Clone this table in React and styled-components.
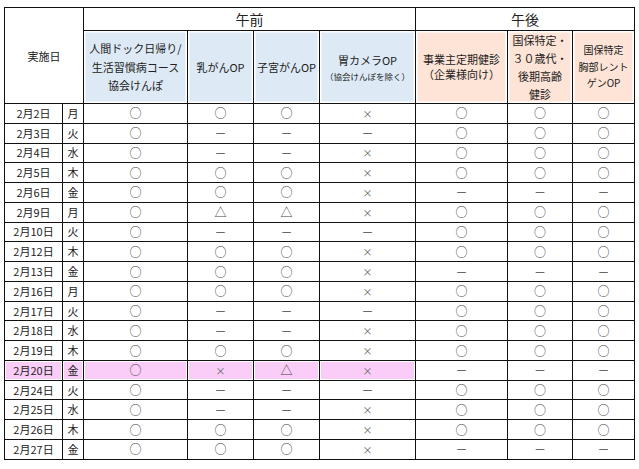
import React from "react";
import styled, { createGlobalStyle } from "styled-components";

const Global = createGlobalStyle`
  html, body { margin: 0; padding: 0; background: #fff; }
  body { font-family: "Noto Sans CJK JP", "Noto Sans", sans-serif; color: #222; }
`;

const Page = styled.div`
  padding: 7px 0 0 4px;
`;

const Table = styled.table`
  border-collapse: collapse;
  table-layout: fixed;
  width: 630px;
`;

const GroupHead = styled.th`
  height: 22px;
  padding: 0;
  border: 1px solid #111;
  font-size: 14px;
  font-weight: 400;
  line-height: 1;
  text-align: center;
  vertical-align: middle;
  color: #222;
`;

const DateHead = styled.th`
  padding: 0;
  border: 1px solid #111;
  font-size: 11px;
  font-weight: 400;
  text-align: center;
  color: #222;
`;

const SubHead = styled.th`
  height: 72px;
  padding: 0 2px;
  border: 1px solid #111;
  background: ${(p) => (p.$pm ? "#fde4d6" : "#dde9f5")};
  box-shadow: inset 0 0 0 1.5px #fff;
  font-size: ${(p) => p.$size || 11}px;
  line-height: ${(p) => p.$lh || 18}px;
  font-weight: 400;
  text-align: center;
  vertical-align: middle;
  color: #222;
`;

const Small = styled.span`
  display: block;
  margin-top: 1px;
  font-size: 8.5px;
  line-height: 14px;
`;

const Row = styled.tr`
  height: 19.78px;
`;

const Cell = styled.td`
  padding: 0;
  border: 1px solid #111;
  text-align: center;
  vertical-align: middle;
  font-size: 11px;
  line-height: 1;
  color: #222;
  background: ${(p) => (p.$hl ? "#f9cdf7" : "#fff")};
  box-shadow: ${(p) => (p.$hl ? "inset 0 0 0 1px #fff" : "none")};
  white-space: nowrap;
`;

const Mark = styled.span`
  display: inline-block;
  font-size: ${(p) => (p.$k === "x" ? 10 : 12)}px;
  color: ${(p) => (p.$k === "x" ? "#666" : "#444")};
  line-height: 1;
`;

const glyph = { o: "○", x: "×", d: "－", t: "△" };

const rows = [
  ["2月2日", "月", "ooox ooo"],
  ["2月3日", "火", "oddd ooo"],
  ["2月4日", "水", "oddx ooo"],
  ["2月5日", "木", "ooox ooo"],
  ["2月6日", "金", "ooox ddd"],
  ["2月9日", "月", "ottx ooo"],
  ["2月10日", "火", "oddd ooo"],
  ["2月12日", "木", "ooox ooo"],
  ["2月13日", "金", "ooox ddd"],
  ["2月16日", "月", "ooox ooo"],
  ["2月17日", "火", "oddd ooo"],
  ["2月18日", "水", "oddx ooo"],
  ["2月19日", "木", "ooox ooo"],
  ["2月20日", "金", "oxtx ddd", true],
  ["2月24日", "火", "oddd ooo"],
  ["2月25日", "水", "oddx ooo"],
  ["2月26日", "木", "ooox ooo"],
  ["2月27日", "金", "ooox ddd"],
];

const widths = [58, 21, 104, 66, 66, 96, 92, 65, 62];

export default function App() {
  return (
    <Page>
      <Global />
      <Table>
        <colgroup>
          {widths.map((w, i) => (
            <col key={i} style={{ width: w }} />
          ))}
        </colgroup>
        <thead>
          <tr>
            <DateHead rowSpan={2} colSpan={2}>実施日</DateHead>
            <GroupHead colSpan={4}>午前</GroupHead>
            <GroupHead colSpan={3}>午後</GroupHead>
          </tr>
          <tr>
            <SubHead $lh={18.5}>
              人間ドック日帰り/
              <br />
              生活習慣病コース
              <br />
              協会けんぽ
            </SubHead>
            <SubHead>乳がんOP</SubHead>
            <SubHead>子宮がんOP</SubHead>
            <SubHead $lh={16}>
              胃カメラOP
              <Small>（協会けんぽを除く）</Small>
            </SubHead>
            <SubHead $pm $lh={15}>
              事業主定期健診
              <br />
              （企業様向け）
            </SubHead>
            <SubHead $pm $lh={18}>
              国保特定・
              <br />
              ３０歳代・
              <br />
              後期高齢
              <br />
              健診
            </SubHead>
            <SubHead $pm $size={10} $lh={16.5}>
              国保特定
              <br />
              胸部レント
              <br />
              ゲンOP
            </SubHead>
          </tr>
        </thead>
        <tbody>
          {rows.map(([date, wd, marks, hl]) => {
            const m = marks.replace(" ", "").split("");
            return (
              <Row key={date}>
                <Cell $hl={hl}>{date}</Cell>
                <Cell $hl={hl}>{wd}</Cell>
                {m.map((k, i) => (
                  <Cell key={i} $hl={hl && i < 4}>
                    <Mark $k={k}>{glyph[k]}</Mark>
                  </Cell>
                ))}
              </Row>
            );
          })}
        </tbody>
      </Table>
    </Page>
  );
}
